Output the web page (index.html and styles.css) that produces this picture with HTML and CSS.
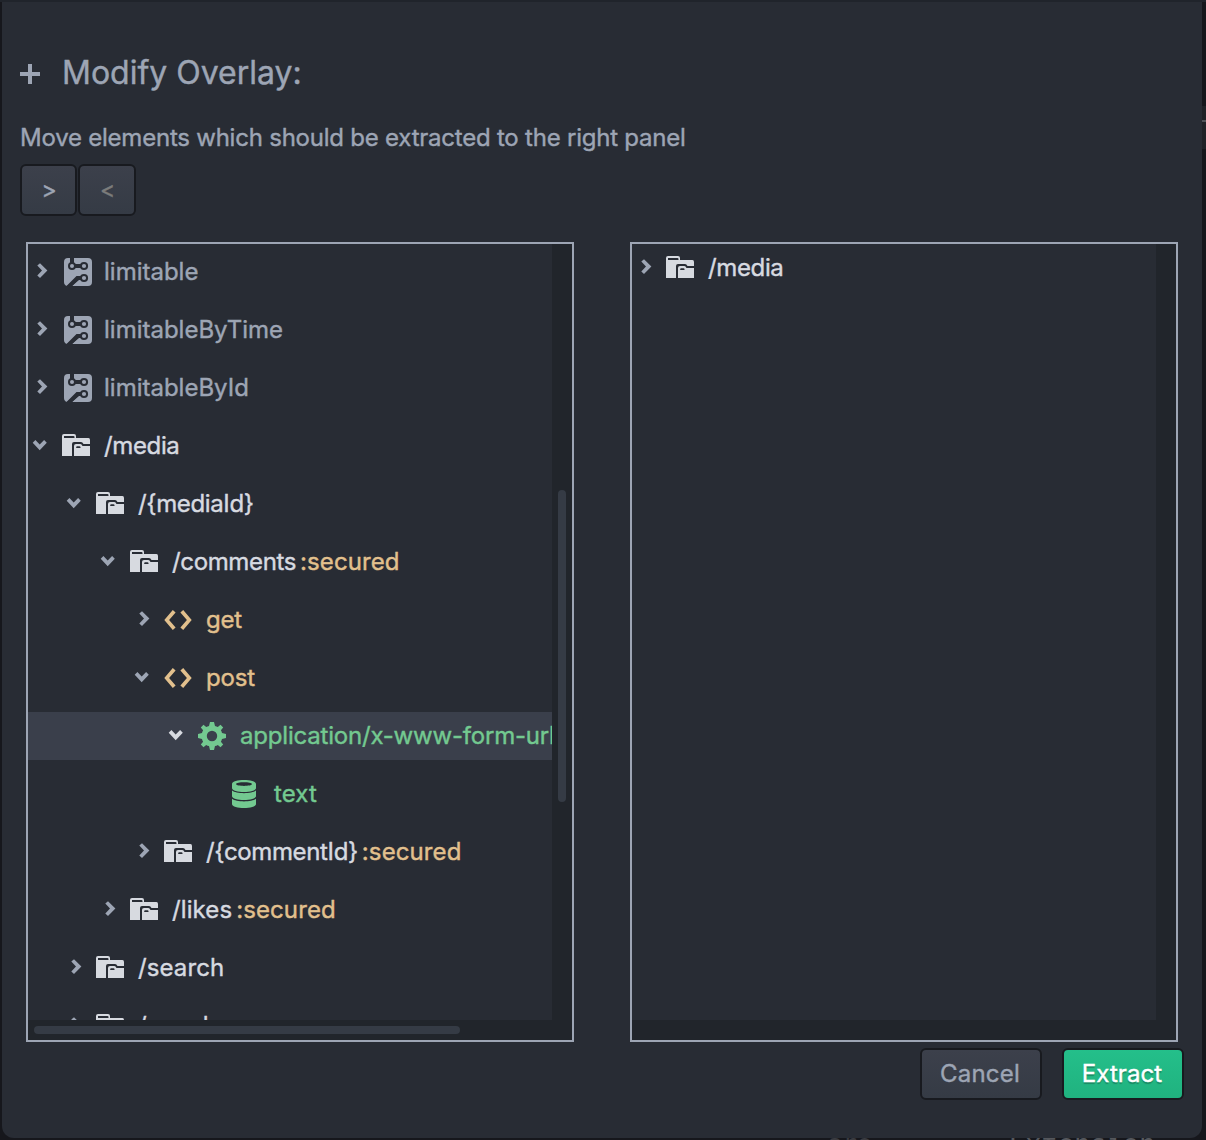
FILE: index.html
```html
<!DOCTYPE html>
<html lang="en">
<head>
<meta charset="utf-8">
<title>Modify Overlay</title>
<link rel="stylesheet" href="styles.css">
</head>
<body>
<svg class="sprite" aria-hidden="true">
  <symbol id="right" viewBox="0 0 34 48"><path d="M9.3 17.6 12 15.2 19.4 22.6 12 30 9.3 27.6 14 22.6Z"/></symbol>
  <symbol id="down" viewBox="0 0 34 48"><path d="M4.7 20.7 7.4 18 11.7 22.6 16.1 18 18.8 20.7 11.7 28.3Z"/></symbol>
  <symbol id="folder" viewBox="0 0 42 48"><path fill-rule="evenodd" d="M0 14Q0 12 2 12H12Q14 12 14 14V16H26.5Q28 16 28 18V22H21.500Q20.500 20 19 20H12Q10 20 10 22V34H0ZM2 14V16H12.500V15Q12.500 14 11.500 14ZM12 34V24Q12 22 14 22H18Q19.500 22 20 23.200L20.500 24H28V34ZM14.200 26H18.500V25.200Q18.500 24.300 17.500 24.300H15.200Q14.200 24.300 14.200 25.200Z"/></symbol>
  <symbol id="blueprint" viewBox="0 0 42 48">
    <path d="M6 10H8V16H12V10H26Q30 10 30 14V34Q30 38 26 38H10L17 31H21V29H16L5 38Q2 37 2 34V14Q2 10 6 10Z"/>
    <g class="cut"><circle cx="10" cy="18" r="4"/><circle cx="22" cy="18" r="4.100"/><circle cx="22" cy="30" r="4.100"/><path d="M11 16H22V20H11ZM22 28V32H17L10 38H4.500L14.500 28Z"/></g>
    <circle cx="10" cy="18" r="2"/><circle cx="22" cy="18" r="2.100"/><circle cx="22" cy="30" r="2.100"/>
  </symbol>
  <symbol id="code" viewBox="0 0 42 48"><path d="M.3 24 8.800 14 11.600 16.600 5.100 24 11.600 31.400 8.800 34ZM27.700 24 19.200 14 16.400 16.600 22.900 24 16.400 31.400 19.200 34Z"/></symbol>
  <symbol id="gear" viewBox="0 0 42 48"><path fill-rule="evenodd" d="M12 10H16L17 14Q18.500 14.400 19.800 15.100L22.500 12.800 25.200 15.500 22.900 18.200Q23.700 19.500 24 21L28 22V26L24 27Q23.600 28.500 22.900 29.800L25.200 32.500 22.500 35.200 19.800 32.900Q18.500 33.700 17 34L16 38H12L11 34Q9.500 33.600 8.200 32.900L5.500 35.200 2.800 32.500 5.100 29.800Q4.300 28.500 4 27L0 26V22L4 21Q4.400 19.500 5.100 18.200L2.800 15.500 5.500 12.800 8.200 15.100Q9.500 14.300 11 14ZM14 18.800A5.200 5.200 0 1 0 14 29.200A5.200 5.200 0 1 0 14 18.800Z"/></symbol>
  <symbol id="database" viewBox="0 0 42 48"><path fill-rule="evenodd" d="M0 14C0 8.700 24 8.700 24 14V18C24 23.300 0 23.300 0 18ZM4 14C4 16.500 20 16.500 20 14S4 11.500 4 14ZM0 20.600C4 24.100 20 24.100 24 20.600V26C24 31.300 0 31.300 0 26ZM0 28.800C4 32.300 20 32.300 24 28.800V34C24 39.300 0 39.300 0 34Z"/></symbol>
</svg>
<div class="backdrop">
  <span class="behind behind-short">are</span>
  <span class="behind behind-long">Extension</span>
  <i class="edge-strip"></i>
</div>
<main class="dialog">
  <header class="title">
    <svg class="plus" viewBox="0 0 20 20"><path d="M8 0H12V8H20V12H12V20H8V12H0V8H8Z"/></svg>
    <h1>Modify Overlay:</h1>
  </header>
  <p class="hint">Move elements which should be extracted to the right panel</p>
  <div class="moves">
    <button class="btn move">&gt;</button>
    <button class="btn move disabled">&lt;</button>
  </div>
  <div class="panels">
    <section class="panel">
      <div class="tree tree-left">
        <div class="row trait"><svg class="chev"><use href="#right"/></svg><svg class="icon"><use href="#blueprint"/></svg><span>limitable</span></div>
        <div class="row trait"><svg class="chev"><use href="#right"/></svg><svg class="icon"><use href="#blueprint"/></svg><span>limitableByTime</span></div>
        <div class="row trait"><svg class="chev"><use href="#right"/></svg><svg class="icon"><use href="#blueprint"/></svg><span>limitableById</span></div>
        <div class="row light"><svg class="chev"><use href="#down"/></svg><svg class="icon"><use href="#folder"/></svg><span>/media</span></div>
        <div class="row light l1"><svg class="chev"><use href="#down"/></svg><svg class="icon"><use href="#folder"/></svg><span>/{mediaId}</span></div>
        <div class="row light l2"><svg class="chev"><use href="#down"/></svg><svg class="icon"><use href="#folder"/></svg><span>/comments</span><b>:secured</b></div>
        <div class="row gold l3"><svg class="chev"><use href="#right"/></svg><svg class="icon"><use href="#code"/></svg><span>get</span></div>
        <div class="row gold l3"><svg class="chev"><use href="#down"/></svg><svg class="icon"><use href="#code"/></svg><span>post</span></div>
        <div class="row green selected l4"><svg class="chev"><use href="#down"/></svg><svg class="icon"><use href="#gear"/></svg><span>application/x-www-form-urlencoded</span></div>
        <div class="row green l5"><svg class="chev"></svg><svg class="icon"><use href="#database"/></svg><span class="wide">text</span></div>
        <div class="row light l3"><svg class="chev"><use href="#right"/></svg><svg class="icon"><use href="#folder"/></svg><span>/{commentId}</span><b>:secured</b></div>
        <div class="row light l2"><svg class="chev"><use href="#right"/></svg><svg class="icon"><use href="#folder"/></svg><span class="wide">/likes</span><b>:secured</b></div>
        <div class="row light l1"><svg class="chev"><use href="#right"/></svg><svg class="icon"><use href="#folder"/></svg><span class="wide">/search</span></div>
        <div class="row light l1"><svg class="chev"><use href="#right"/></svg><svg class="icon"><use href="#folder"/></svg><span>/popular</span></div>
      </div>
      <div class="vbar"><i></i></div>
      <div class="hbar"><i></i></div>
    </section>
    <section class="panel">
      <div class="tree">
        <div class="row light"><svg class="chev"><use href="#right"/></svg><svg class="icon"><use href="#folder"/></svg><span>/media</span></div>
      </div>
      <div class="vbar"></div>
      <div class="hbar"></div>
    </section>
  </div>
  <footer class="actions">
    <button class="btn cancel">Cancel</button>
    <button class="btn extract">Extract</button>
  </footer>
</main>
</body>
</html>
```

FILE: styles.css
```css
* { box-sizing: border-box; }
body {
  margin: 0;
  width: 1206px;
  height: 1140px;
  padding: 2px 4px 2px 2px;
  position: relative;
  overflow: hidden;
  background: #16171c;
  font-family: Inter, "Liberation Sans", sans-serif;
  font-size: 24px;
  color: #9da5b4;
}
.sprite { position: absolute; width: 0; height: 0; }
.backdrop { position: absolute; inset: 0; border-top: 2px solid #20242b; }
.behind {
  position: absolute;
  top: 1127px;
  font: 27px/30px "DejaVu Sans Mono", monospace;
  color: #55575c;
}
.behind-long { left: 1009px; }
.behind-short { left: 828px; font-size: 24px; color: #3a3b40; }
.edge-strip {
  position: absolute;
  right: 0;
  top: 104px;
  width: 4px;
  height: 43px;
  background: linear-gradient(#202227 14px, #505358 14px, #505358 16px, #202227 16px);
}
.dialog {
  position: relative;
  height: 1136px;
  display: flex;
  flex-direction: column;
  background: #282c34;
  border-radius: 0 0 12px 12px;
  -webkit-text-stroke: .4px currentColor;
}
.title {
  display: flex;
  align-items: center;
  gap: 22px;
  height: 40px;
  margin: 51px 0 0 18px;
}
.plus { width: 20px; height: 20px; margin-top: 2px; fill: currentColor; }
h1 { margin: 0; font-size: 32px; font-weight: 400; line-height: 40px; white-space: nowrap; }
.hint { margin: 30px 0 0 18px; line-height: 30px; letter-spacing: -.225px; white-space: nowrap; }
.moves { display: flex; gap: 1px; margin: 11px 0 0 18px; }
.btn {
  height: 52px;
  padding: 0 0 2px;
  border: 2px solid #181a1f;
  border-radius: 6px;
  background: linear-gradient(#3c404b, #353b45);
  color: #9da5b4;
  font: inherit;
  -webkit-text-stroke: inherit;
}
.move { width: 57px; padding: 0 0 0 1px; font-size: 23px; }
.move + .move { width: 58px; }
.disabled { color: #7c7c7b; }
.panels { display: flex; justify-content: space-between; margin: 26px 24px 0 24px; }
.panel {
  width: 548px;
  height: 800px;
  border: 2px solid #9da5b4;
  display: grid;
  grid-template: 776px 20px / 524px 20px;
}
.tree { display: flex; flex-direction: column; gap: 10px; overflow: hidden; min-width: 0; }
.tree-left { padding-top: 4px; }
.row { display: flex; flex: none; height: 48px; line-height: 48px; letter-spacing: -.2px; white-space: nowrap; }
.row b { font-weight: 400; color: #e2c08d; margin-left: 4px; letter-spacing: .1px; }
.row .wide { letter-spacing: .1px; }
.trait { letter-spacing: 0; }
.chev { width: 34px; height: 48px; flex: none; fill: #9da5b4; }
.icon { width: 42px; height: 48px; flex: none; fill: currentColor; }
.cut { fill: #282c34; }
.light { color: #d7dae0; letter-spacing: -.36px; }
.gold { color: #e2c08d; }
.green { color: #73c990; }
.selected { background: #3a3f4b; }
.selected .chev { fill: #d7dae0; }
.l1 { padding-left: 34px; }
.l2 { padding-left: 68px; }
.l3 { padding-left: 102px; }
.l4 { padding-left: 136px; }
.l5 { padding-left: 170px; }
.vbar { background: #21252b; padding: 246px 6px 0; }
.vbar i { display: block; height: 312px; border-radius: 4px; background: #353b45; }
.hbar { grid-column: 1 / 3; background: #21252b; padding: 6px; }
.hbar i { display: block; width: 426px; height: 8px; border-radius: 4px; background: #353b45; }
.actions { display: flex; justify-content: flex-end; gap: 20px; margin: 6px 18px 0 0; }
.cancel { width: 122px; padding-right: 2px; letter-spacing: .2px; }
.extract {
  width: 122px;
  padding-right: 2px;
  letter-spacing: .1px;
  background: linear-gradient(#24bf8a, #20b27f);
  color: #fff;
  text-shadow: 0 2px 1px rgba(0, 0, 0, .25);
}
```
